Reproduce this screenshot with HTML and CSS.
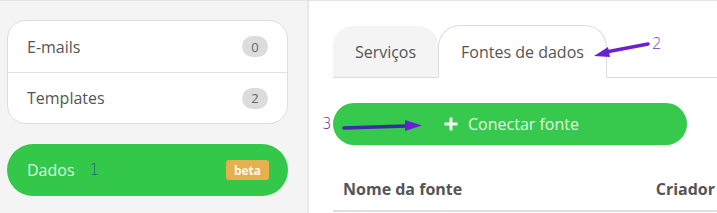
FILE: index.html
```html
<!DOCTYPE html>
<html lang="pt">
<head>
<meta charset="utf-8">
<title>Dados</title>
<link rel="stylesheet" href="styles.css">
</head>
<body>
<div class="page">
  <aside class="sidebar">
    <div class="card">
      <div class="row"><span class="label">E-mails</span><span class="count">0</span></div>
      <div class="row"><span class="label">Templates</span><span class="count">2</span></div>
    </div>
    <div class="dados">
      <span class="dados-label">Dados</span>
      <span class="anno anno-one">1</span>
      <span class="beta">beta</span>
    </div>
  </aside>
  <main class="main">
    <div class="tabs">
      <div class="tab">Serviços</div>
      <div class="tab tab-active">Fontes de dados</div>
      <span class="anno anno-two">2</span>
    </div>
    <div class="connect-row">
      <span class="anno anno-three">3</span>
      <button class="connect">
        <svg class="plus" width="14" height="14" viewBox="0 0 14 14"><path d="M7 0.5v13M0.5 7h13" stroke="#f2fbf3" stroke-width="3" fill="none"/></svg>
        <span>Conectar fonte</span>
      </button>
    </div>
    <div class="thead">
      <span class="th">Nome da fonte</span>
      <span class="th">Criador</span>
    </div>
  </main>
  <svg class="arrows" width="717" height="213" viewBox="0 0 717 213">
    <path d="M648 43 L606 51" stroke="#6a22cf" stroke-width="3.5" stroke-linecap="round" fill="none"/>
    <path d="M594 55 L608 46 L610 56 Z" fill="#6a22cf"/>
    <path d="M344 127 L406 125" stroke="#3f2aa3" stroke-width="3.5" stroke-linecap="round" fill="none"/>
    <path d="M422 124.5 L405 119 L405 130 Z" fill="#6a1fd6"/>
  </svg>
</div>
</body>
</html>
```
FILE: styles.css
```css
* { box-sizing: border-box; }
html, body { margin: 0; padding: 0; }
body {
  font-family: "Open Sans", "Noto Sans", sans-serif;
  color: #555;
  background: #fff;
}
.page {
  position: relative;
  display: flex;
  width: 717px;
  height: 213px;
  overflow: hidden;
  border-top: 1px solid #e4e4e4;
}
.sidebar {
  width: 309px;
  flex: none;
  background: #f4f4f4;
  border-right: 2px solid #e9e9e9;
  padding: 19px 0 0 7px;
}
.card {
  width: 281px;
  background: #fff;
  border: 1px solid #dedede;
  border-radius: 19px;
  overflow: hidden;
}
.row {
  height: 51px;
  display: flex;
  align-items: center;
  justify-content: space-between;
  padding: 0 19px 0 19px;
  font-size: 16px;
  color: #555;
}
.row + .row { border-top: 1px solid #e2e2e2; }
.count {
  width: 26px;
  height: 21px;
  border-radius: 11px;
  background: #dcdcdc;
  font-size: 13px;
  color: #666;
  display: flex;
  align-items: center;
  justify-content: center;
}
.dados {
  margin-top: 20px;
  width: 281px;
  height: 52px;
  border-radius: 26px;
  background: #34c84b;
  display: flex;
  align-items: center;
  padding: 0 19px 0 20px;
}
.dados-label {
  font-size: 16px;
  color: #dcf7df;
}
.anno {
  font-family: "DejaVu Sans", sans-serif;
  font-weight: 300;
  font-size: 15px;
}
.anno-one {
  color: #2c5a8c;
  margin-left: 15px;
  flex: 1;
}
.beta {
  background: #e6b04e;
  color: #fff8ea;
  font-size: 12px;
  font-weight: 700;
  border-radius: 3px;
  width: 43px;
  height: 20px;
  display: flex;
  align-items: center;
  justify-content: center;
}
.main {
  flex: 1;
  padding: 25px 0 0 24px;
}
.tabs {
  position: relative;
  display: flex;
  align-items: flex-end;
  height: 52px;
  border-bottom: 1px solid #dcdcdc;
}
.tab {
  height: 51px;
  display: flex;
  align-items: center;
  justify-content: center;
  font-size: 16px;
  color: #555;
}
.tab:first-child {
  width: 105px;
  background: #f4f4f4;
  border-radius: 20px 20px 0 0;
}
.tab-active {
  width: 169px;
  height: 53px;
  margin-bottom: -1px;
  background: #fff;
  border: 1px solid #dcdcdc;
  border-bottom-color: #fff;
  border-radius: 22px 22px 0 0;
}
.anno-two {
  color: #7a2fd0;
  margin: 0 0 24px 45px;
}
.connect-row {
  position: relative;
  margin-top: 25px;
}
.anno-three {
  position: absolute;
  left: -11px;
  top: 12px;
  color: #6a2a9e;
}
.connect {
  width: 354px;
  height: 42px;
  border: none;
  border-radius: 21px;
  background: #36c94e;
  color: #e0f7e3;
  font-family: inherit;
  font-size: 16px;
  display: flex;
  align-items: center;
  justify-content: center;
  gap: 10px;
  padding: 0 0 0 3px;
  margin-left: 0;
}
.plus { display: block; }
.thead {
  margin-top: 24px;
  height: 43px;
  display: flex;
  align-items: center;
  justify-content: space-between;
  padding: 0 0 2px 10px;
  border-bottom: 2px solid #dedede;
  margin-right: -20px;
}
.th {
  font-size: 16px;
  font-weight: 700;
  color: #555;
}
.th:last-child { margin-right: 22px; }
.arrows {
  position: absolute;
  left: 0;
  top: 0;
  pointer-events: none;
}
```
